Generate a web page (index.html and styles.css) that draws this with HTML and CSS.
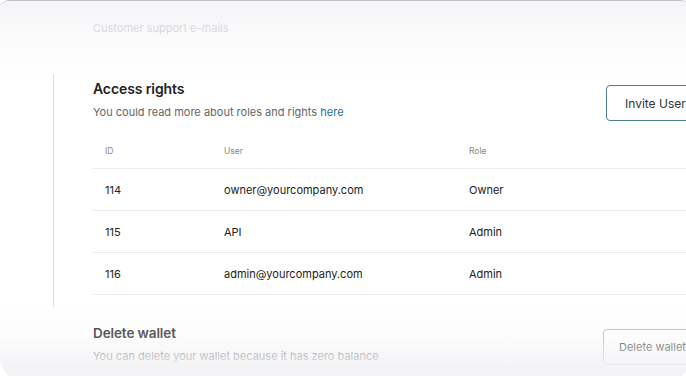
FILE: index.html
```html
<!DOCTYPE html>
<html>
  <head>
    <meta charset="utf-8">
    <title>Wallet settings</title>
    <link rel="stylesheet" href="styles.css">
  </head>
  <body>
    <div class="card">
      <div class="prev-section">Customer support e-mails</div>

      <div class="section">
        <div class="section-head">
          <div>
            <h2>Access rights</h2>
            <p class="note">You could read more about roles and rights <a href="#">here</a></p>
          </div>
          <button class="button">Invite User</button>
        </div>

        <div class="table">
          <div class="row head">
            <span>ID</span><span>User</span><span>Role</span>
          </div>
          <div class="row">
            <span>114</span><span>owner@yourcompany.com</span><span>Owner</span>
          </div>
          <div class="row">
            <span>115</span><span>API</span><span>Admin</span>
          </div>
          <div class="row">
            <span>116</span><span>admin@yourcompany.com</span><span>Admin</span>
          </div>
        </div>
      </div>

      <div class="section-head danger">
        <div>
          <h2>Delete wallet</h2>
          <p class="note">You can delete your wallet because it has zero balance</p>
        </div>
        <button class="button button-red">Delete wallet</button>
      </div>

      <!-- fades over the top and bottom of the card -->
      <div class="fade-top"></div>
      <div class="fade-bottom"></div>
    </div>
  </body>
</html>
```

FILE: styles.css
```css
html, body {
  margin: 0;
  height: 100%;
  overflow: hidden;
  background-color: #ffffff;
}

body {
  font-family: 'Inter', 'Liberation Sans', sans-serif;
  color: #222;
}

.card {
  position: relative;
  margin: 0 -6px 0 -2px;
  height: 392px;
  background-color: #fff;
  border-top: 1px solid #bfbfc4;
  border-radius: 12px 12px 44px 44px;
  overflow: hidden;
  padding-left: 95px;
  box-sizing: border-box;
}

.prev-section {
  padding-top: 20px;
  font-size: 11px;
  color: #a9a9ae;
  height: 53px;
}

.section {
  border-left: 1px solid #dcdcdc;
  margin-left: -40px;
  padding-left: 39px;
  padding-bottom: 12px;
}

.section-head {
  display: flex;
  justify-content: space-between;
  align-items: flex-start;
}

h2 {
  margin: 6px 0 0;
  font-size: 14px;
  font-weight: 600;
  letter-spacing: -0.1px;
}

.note {
  margin: 8px 0 0;
  font-size: 11px;
  color: #666;
}

.note a {
  color: #1f6f97;
  text-decoration: none;
}

.button {
  font-family: 'Inter', 'Liberation Sans', sans-serif;
  background-color: #fff;
  border: 1px solid #4c7f95;
  border-radius: 4px;
  color: #333;
  font-size: 12px;
  width: 86px;
  height: 36px;
  padding: 0 0 0 18px;
  text-align: left;
  white-space: nowrap;
  margin-top: 11px;
}

.table {
  margin-top: 25px;
}

.row {
  display: grid;
  grid-template-columns: 119px 245px 1fr;
  height: 41px;
  align-items: center;
  padding-left: 12px;
  border-bottom: 1px solid #ececec;
  font-size: 11px;
}

.row.head {
  height: 22px;
  align-items: start;
  font-size: 8.5px;
  color: #888;
}

.danger {
  margin-top: 12px;
}

.danger h2 {
  font-size: 13.5px;
}

.button-red {
  border-color: #e3a9b0;
  width: 88px;
  margin-top: 10px;
  margin-right: 1px;
  padding-left: 15px;
  font-size: 11px;
}

.fade-top {
  position: absolute;
  left: 0;
  right: 0;
  top: 0;
  height: 80px;
  background: linear-gradient(to bottom, rgba(243, 243, 246, 0.85), rgba(247, 247, 249, 0.55) 45%, rgba(255, 255, 255, 0));
  pointer-events: none;
}

.fade-bottom {
  position: absolute;
  left: 0;
  right: 0;
  top: 300px;
  bottom: 0;
  background: linear-gradient(to bottom, rgba(244, 244, 247, 0), rgba(244, 244, 247, 0.3) 42%, rgba(242, 242, 245, 0.88) 72%, rgba(240, 240, 243, 0.96));
  pointer-events: none;
}
```
